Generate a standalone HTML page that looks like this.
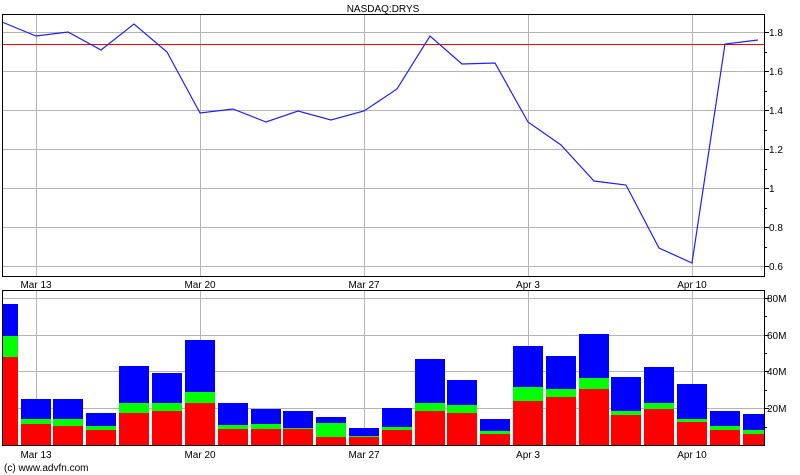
<!DOCTYPE html>
<html><head><style>body{margin:0;background:#fff}svg{display:block}text{font-family:"Liberation Sans",sans-serif;font-size:10px;fill:#000}</style></head><body>
<svg width="800" height="475" viewBox="0 0 800 475" xmlns="http://www.w3.org/2000/svg" shape-rendering="crispEdges">
<text x="383" y="12" text-anchor="middle">NASDAQ:DRYS</text>
<g stroke="#b4b4b4" stroke-width="1">
<line x1="2" y1="32.5" x2="764" y2="32.5"/><line x1="2" y1="71.5" x2="764" y2="71.5"/><line x1="2" y1="110.5" x2="764" y2="110.5"/><line x1="2" y1="149.5" x2="764" y2="149.5"/><line x1="2" y1="188.5" x2="764" y2="188.5"/><line x1="2" y1="227.5" x2="764" y2="227.5"/><line x1="2" y1="266.5" x2="764" y2="266.5"/>
<line x1="36.5" y1="14" x2="36.5" y2="276"/><line x1="200.5" y1="14" x2="200.5" y2="276"/><line x1="364.5" y1="14" x2="364.5" y2="276"/><line x1="528.5" y1="14" x2="528.5" y2="276"/><line x1="692.5" y1="14" x2="692.5" y2="276"/>
<line x1="2" y1="298.5" x2="764" y2="298.5"/><line x1="2" y1="335.5" x2="764" y2="335.5"/><line x1="2" y1="371.5" x2="764" y2="371.5"/><line x1="2" y1="408.5" x2="764" y2="408.5"/>
<line x1="36.5" y1="290" x2="36.5" y2="446"/><line x1="200.5" y1="290" x2="200.5" y2="446"/><line x1="364.5" y1="290" x2="364.5" y2="446"/><line x1="528.5" y1="290" x2="528.5" y2="446"/><line x1="692.5" y1="290" x2="692.5" y2="446"/>
</g>
<line x1="2" y1="44.5" x2="764" y2="44.5" stroke="#f00"/>
<polyline shape-rendering="auto" fill="none" stroke="#2020ff" stroke-width="1.2" points="2,22 36,36 68,32 101,50 134,24 167,52 200,113 233,109 266,122 298,111 331,120 364,111 397,89 430,36 462,64 495,63 528,122 561,145 594,181 626,185 659,248 692,263 725,44 758,40"/>
<rect x="2.5" y="14.5" width="762" height="262" fill="none" stroke="#000"/>
<g stroke="#000">
<line x1="765" y1="32.5" x2="769" y2="32.5"/><line x1="765" y1="71.5" x2="769" y2="71.5"/><line x1="765" y1="110.5" x2="769" y2="110.5"/><line x1="765" y1="149.5" x2="769" y2="149.5"/><line x1="765" y1="188.5" x2="769" y2="188.5"/><line x1="765" y1="227.5" x2="769" y2="227.5"/><line x1="765" y1="266.5" x2="769" y2="266.5"/>
<line x1="765" y1="52.5" x2="767" y2="52.5"/><line x1="765" y1="91.5" x2="767" y2="91.5"/><line x1="765" y1="130.5" x2="767" y2="130.5"/><line x1="765" y1="169.5" x2="767" y2="169.5"/><line x1="765" y1="208.5" x2="767" y2="208.5"/><line x1="765" y1="247.5" x2="767" y2="247.5"/>
<line x1="765" y1="298.5" x2="769" y2="298.5"/><line x1="765" y1="335.5" x2="769" y2="335.5"/><line x1="765" y1="371.5" x2="769" y2="371.5"/><line x1="765" y1="408.5" x2="769" y2="408.5"/>
<line x1="765" y1="316.5" x2="767" y2="316.5"/><line x1="765" y1="353.5" x2="767" y2="353.5"/><line x1="765" y1="390.5" x2="767" y2="390.5"/><line x1="765" y1="427.5" x2="767" y2="427.5"/>
</g>
<g text-anchor="start">
<text x="769" y="36">1.8</text><text x="769" y="75">1.6</text><text x="769" y="114">1.4</text><text x="769" y="153">1.2</text><text x="769" y="192">1</text><text x="769" y="231">0.8</text><text x="769" y="270">0.6</text>
<text x="767" y="302">80M</text><text x="767" y="339">60M</text><text x="767" y="375">40M</text><text x="767" y="412">20M</text>
</g>
<g text-anchor="middle">
<text x="36" y="288">Mar 13</text><text x="200" y="288">Mar 20</text><text x="364" y="288">Mar 27</text><text x="528" y="288">Apr 3</text><text x="692" y="288">Apr 10</text>
<text x="36" y="458">Mar 13</text><text x="200" y="458">Mar 20</text><text x="364" y="458">Mar 27</text><text x="528" y="458">Apr 3</text><text x="692" y="458">Apr 10</text>
</g>
<text x="4" y="471">(c) www.advfn.com</text>
<g>
<rect x="3" y="304" width="15" height="141" fill="#00f"/><rect x="3" y="336" width="15" height="109" fill="#0f0"/><rect x="3" y="357" width="15" height="88" fill="#f00"/>
<rect x="21" y="399" width="30" height="46" fill="#00f"/><rect x="21" y="419" width="30" height="26" fill="#0f0"/><rect x="21" y="424" width="30" height="21" fill="#f00"/>
<rect x="53" y="399" width="30" height="46" fill="#00f"/><rect x="53" y="419" width="30" height="26" fill="#0f0"/><rect x="53" y="426" width="30" height="19" fill="#f00"/>
<rect x="86" y="413" width="30" height="32" fill="#00f"/><rect x="86" y="426" width="30" height="19" fill="#0f0"/><rect x="86" y="430" width="30" height="15" fill="#f00"/>
<rect x="119" y="366" width="30" height="79" fill="#00f"/><rect x="119" y="403" width="30" height="42" fill="#0f0"/><rect x="119" y="413" width="30" height="32" fill="#f00"/>
<rect x="152" y="373" width="30" height="72" fill="#00f"/><rect x="152" y="403" width="30" height="42" fill="#0f0"/><rect x="152" y="411" width="30" height="34" fill="#f00"/>
<rect x="185" y="340" width="30" height="105" fill="#00f"/><rect x="185" y="392" width="30" height="53" fill="#0f0"/><rect x="185" y="403" width="30" height="42" fill="#f00"/>
<rect x="218" y="403" width="30" height="42" fill="#00f"/><rect x="218" y="425" width="30" height="20" fill="#0f0"/><rect x="218" y="429" width="30" height="16" fill="#f00"/>
<rect x="251" y="409" width="30" height="36" fill="#00f"/><rect x="251" y="424" width="30" height="21" fill="#0f0"/><rect x="251" y="429" width="30" height="16" fill="#f00"/>
<rect x="283" y="411" width="30" height="34" fill="#00f"/><rect x="283" y="428" width="30" height="17" fill="#0f0"/><rect x="283" y="429" width="30" height="16" fill="#f00"/>
<rect x="316" y="417" width="30" height="28" fill="#00f"/><rect x="316" y="423" width="30" height="22" fill="#0f0"/><rect x="316" y="437" width="30" height="8" fill="#f00"/>
<rect x="349" y="428" width="30" height="17" fill="#00f"/><rect x="349" y="436" width="30" height="9" fill="#0f0"/><rect x="349" y="437" width="30" height="8" fill="#f00"/>
<rect x="382" y="408" width="30" height="37" fill="#00f"/><rect x="382" y="427" width="30" height="18" fill="#0f0"/><rect x="382" y="430" width="30" height="15" fill="#f00"/>
<rect x="415" y="359" width="30" height="86" fill="#00f"/><rect x="415" y="403" width="30" height="42" fill="#0f0"/><rect x="415" y="411" width="30" height="34" fill="#f00"/>
<rect x="447" y="380" width="30" height="65" fill="#00f"/><rect x="447" y="405" width="30" height="40" fill="#0f0"/><rect x="447" y="413" width="30" height="32" fill="#f00"/>
<rect x="480" y="419" width="30" height="26" fill="#00f"/><rect x="480" y="431" width="30" height="14" fill="#0f0"/><rect x="480" y="434" width="30" height="11" fill="#f00"/>
<rect x="513" y="346" width="30" height="99" fill="#00f"/><rect x="513" y="387" width="30" height="58" fill="#0f0"/><rect x="513" y="401" width="30" height="44" fill="#f00"/>
<rect x="546" y="356" width="30" height="89" fill="#00f"/><rect x="546" y="389" width="30" height="56" fill="#0f0"/><rect x="546" y="397" width="30" height="48" fill="#f00"/>
<rect x="579" y="334" width="30" height="111" fill="#00f"/><rect x="579" y="378" width="30" height="67" fill="#0f0"/><rect x="579" y="389" width="30" height="56" fill="#f00"/>
<rect x="611" y="377" width="30" height="68" fill="#00f"/><rect x="611" y="411" width="30" height="34" fill="#0f0"/><rect x="611" y="415" width="30" height="30" fill="#f00"/>
<rect x="644" y="367" width="30" height="78" fill="#00f"/><rect x="644" y="403" width="30" height="42" fill="#0f0"/><rect x="644" y="409" width="30" height="36" fill="#f00"/>
<rect x="677" y="384" width="30" height="61" fill="#00f"/><rect x="677" y="419" width="30" height="26" fill="#0f0"/><rect x="677" y="422" width="30" height="23" fill="#f00"/>
<rect x="710" y="411" width="30" height="34" fill="#00f"/><rect x="710" y="426" width="30" height="19" fill="#0f0"/><rect x="710" y="430" width="30" height="15" fill="#f00"/>
<rect x="743" y="414" width="21" height="31" fill="#00f"/><rect x="743" y="430" width="21" height="15" fill="#0f0"/><rect x="743" y="434" width="21" height="11" fill="#f00"/>
</g>
<rect x="2.5" y="290.5" width="762" height="155" fill="none" stroke="#000"/>
</svg>
</body></html>
